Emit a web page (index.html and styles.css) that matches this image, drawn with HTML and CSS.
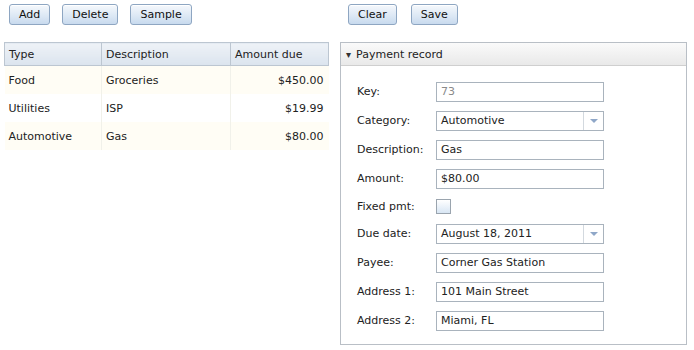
FILE: index.html
```html
<!DOCTYPE html>
<html lang="en">
<head>
    <meta charset="UTF-8">
    <title>Payments</title>
    <link rel="stylesheet" href="styles.css">
</head>
<body>
    <div class="app">
        <div class="left-pane">
            <div class="toolbar">
                <button class="btn">Add</button>
                <button class="btn">Delete</button>
                <button class="btn">Sample</button>
            </div>
            <table class="grid">
                <thead>
                    <tr>
                        <th class="col-type">Type</th>
                        <th class="col-desc">Description</th>
                        <th class="col-amount">Amount due</th>
                    </tr>
                </thead>
                <tbody>
                    <tr class="odd">
                        <td>Food</td>
                        <td>Groceries</td>
                        <td class="num">$450.00</td>
                    </tr>
                    <tr>
                        <td>Utilities</td>
                        <td>ISP</td>
                        <td class="num">$19.99</td>
                    </tr>
                    <tr class="odd">
                        <td>Automotive</td>
                        <td>Gas</td>
                        <td class="num">$80.00</td>
                    </tr>
                </tbody>
            </table>
        </div>

        <div class="right-pane">
            <div class="toolbar">
                <button class="btn">Clear</button>
                <button class="btn">Save</button>
            </div>
            <div class="panel">
                <div class="panel-header">
                    <span class="caret">&#9662;</span>
                    <span>Payment record</span>
                </div>
                <div class="form">
                    <label>Key:</label>
                    <div class="field disabled">73</div>

                    <label>Category:</label>
                    <div class="field combo">
                        <span class="combo-text">Automotive</span>
                        <span class="combo-btn"><span class="arrow"></span></span>
                    </div>

                    <label>Description:</label>
                    <div class="field">Gas</div>

                    <label>Amount:</label>
                    <div class="field">$80.00</div>

                    <label class="short">Fixed pmt:</label>
                    <div class="check-cell"><span class="checkbox"></span></div>

                    <label>Due date:</label>
                    <div class="field combo">
                        <span class="combo-text">August 18, 2011</span>
                        <span class="combo-btn"><span class="arrow"></span></span>
                    </div>

                    <label>Payee:</label>
                    <div class="field">Corner Gas Station</div>

                    <label>Address 1:</label>
                    <div class="field">101 Main Street</div>

                    <label>Address 2:</label>
                    <div class="field">Miami, FL</div>
                </div>
            </div>
        </div>
    </div>
</body>
</html>
```

FILE: styles.css
```css
body {
    margin: 0;
    font-family: 'DejaVu Sans', Verdana, sans-serif;
    font-size: 11px;
    color: #222;
    background-color: white;
}

.app {
    display: flex;
    padding: 4px 0 0 4px;
}

.left-pane {
    width: 325px;
}

.right-pane {
    width: 347px;
    margin-left: 11px;
}

.toolbar {
    display: flex;
    gap: 12px;
    height: 38px;
    padding-left: 5px;
    box-sizing: border-box;
}

.right-pane .toolbar {
    padding-left: 8px;
    gap: 14px;
}

.btn {
    height: 21px;
    padding: 0 9px;
    font-family: inherit;
    font-size: 11px;
    color: #111;
    border: 1px solid #8ea6c2;
    border-radius: 3px;
    background: linear-gradient(#f5f8fc, #dbe7f4 60%, #c8daee);
    box-shadow: inset 0 1px 0 #ffffff;
}

/* data grid */
.grid {
    width: 325px;
    border-collapse: collapse;
    table-layout: fixed;
}

.grid th {
    height: 22px;
    padding: 0 4px;
    text-align: left;
    font-weight: normal;
    background: linear-gradient(#eef2f7, #dbe4ee);
    border: 1px solid #bcc6d1;
}

.col-type { width: 88px; }
.col-desc { width: 120px; }

.grid td {
    height: 28px;
    padding: 0 4px;
    border-right: 1px solid #f1f1ea;
}

.grid td:last-child {
    border-right: none;
}

.grid tr.odd td {
    background-color: #fffdf5;
}

.grid .num {
    text-align: right;
    padding-right: 5px;
}

/* payment record panel */
.panel {
    border: 1px solid #b9bfc6;
    height: 303px;
    box-sizing: border-box;
}

.panel-header {
    height: 22px;
    display: flex;
    align-items: center;
    gap: 5px;
    padding-left: 5px;
    background: linear-gradient(#fafafa, #e9e9e9);
    border-bottom: 1px solid #cfcfcf;
}

.caret {
    font-size: 10px;
    color: #333;
}

.form {
    display: grid;
    grid-template-columns: 79px 168px;
    row-gap: 9px;
    padding: 16px 0 0 16px;
    align-items: center;
}

.form label {
    height: 20px;
    line-height: 20px;
}

.form label.short {
    height: 17px;
    line-height: 17px;
}

.field {
    height: 20px;
    box-sizing: border-box;
    border: 1px solid #a9b3bd;
    padding: 0 4px;
    line-height: 18px;
    background-color: white;
}

.field.disabled {
    color: #8a8a8a;
}

.combo {
    display: flex;
    padding: 0;
}

.combo-text {
    flex: 1;
    padding-left: 4px;
}

.combo-btn {
    width: 19px;
    border-left: 1px solid #d3d9df;
    display: flex;
    align-items: center;
    justify-content: center;
}

.arrow {
    width: 0;
    height: 0;
    border-left: 4px solid transparent;
    border-right: 4px solid transparent;
    border-top: 4px solid #8fa7c8;
}

.check-cell {
    height: 17px;
    display: flex;
    align-items: center;
}

.checkbox {
    width: 13px;
    height: 13px;
    border: 1px solid #9aa4ae;
    background: linear-gradient(#ffffff, #d8e6f4);
}
```
